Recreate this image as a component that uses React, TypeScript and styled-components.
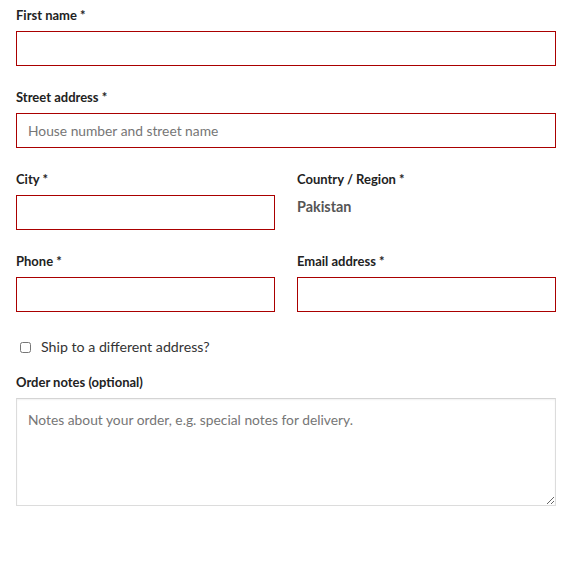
import React from "react";
import styled, { createGlobalStyle } from "styled-components";

const Global = createGlobalStyle`
  html, body { margin: 0; padding: 0; background: #fff; }
  body { font-family: Lato, "Open Sans", sans-serif; color: #333; }
  * { box-sizing: border-box; }
`;

const Form = styled.form`
  width: 540px;
  margin-left: 16px;
  padding-top: 5px;
  display: flex;
  flex-direction: column;
`;

const Row = styled.div`
  display: grid;
  grid-template-columns: 1fr 1fr;
  column-gap: 22px;
`;

const Field = styled.div<{ $gap?: number }>`
  display: flex;
  flex-direction: column;
  margin-bottom: ${(p) => (p.$gap ?? 21)}px;
`;

const Label = styled.label`
  font-size: 13px;
  font-weight: 700;
  line-height: 20px;
  color: #222;
  margin-bottom: 6px;
`;

const Input = styled.input<{ $invalid?: boolean }>`
  height: 35px;
  width: 100%;
  border: 1px solid ${(p) => (p.$invalid ? "#a00" : "#ddd")};
  border-radius: 0;
  padding: 0 11px;
  font-family: Lato, sans-serif;
  font-size: 13.8px;
  color: #333;
  background: #fff;
  outline: none;
  &::placeholder { color: #767676; }
`;

const StaticValue = styled.div`
  font-size: 14.4px;
  font-weight: 700;
  line-height: 35px;
  height: 35px;
  color: #555;
  margin-top: -6px;
  margin-bottom: 6px;
`;

const CheckRow = styled.label`
  display: flex;
  align-items: center;
  gap: 10px;
  padding-left: 4px;
  font-size: 14.2px;
  line-height: 20px;
  color: #333;
  margin-top: 4px;
  margin-bottom: 15px;
`;

const Check = styled.input`
  width: 11px;
  height: 11px;
  margin: 0;
`;

const Notes = styled.textarea`
  width: 100%;
  height: 108px;
  border: 1px solid #dcdcdc;
  border-top-color: #d4d4d4;
  box-shadow: inset 0 1px 2px rgba(0, 0, 0, 0.06);
  padding: 11px 11px;
  font-family: Lato, sans-serif;
  font-size: 13.8px;
  line-height: 20px;
  color: #333;
  outline: none;
  resize: vertical;
  &::placeholder { color: #767676; }
`;

export default function App() {
  return (
    <>
      <Global />
      <Form>
        <Field>
          <Label>First name *</Label>
          <Input $invalid />
        </Field>
        <Field>
          <Label>Street address *</Label>
          <Input $invalid placeholder="House number and street name" />
        </Field>
        <Row>
          <Field>
            <Label>City *</Label>
            <Input $invalid />
          </Field>
          <Field>
            <Label>Country / Region *</Label>
            <StaticValue>Pakistan</StaticValue>
          </Field>
        </Row>
        <Row>
          <Field>
            <Label>Phone *</Label>
            <Input $invalid />
          </Field>
          <Field>
            <Label>Email address *</Label>
            <Input $invalid />
          </Field>
        </Row>
        <CheckRow>
          <Check type="checkbox" />
          Ship to a different address?
        </CheckRow>
        <Field $gap={0}>
          <Label>Order notes (optional)</Label>
          <Notes placeholder="Notes about your order, e.g. special notes for delivery." />
        </Field>
      </Form>
    </>
  );
}
